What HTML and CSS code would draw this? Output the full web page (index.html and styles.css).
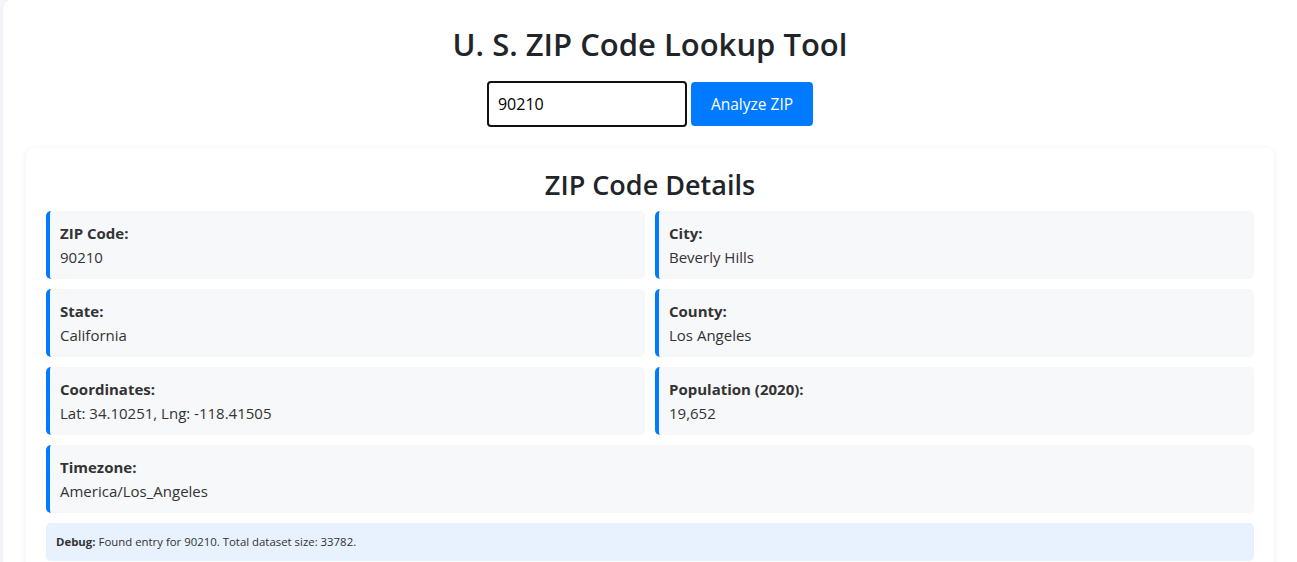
FILE: index.html
```html
<!DOCTYPE html>
<html lang="en">

  <head>
    <meta charset="UTF-8">
    <meta name="viewport" content="width=device-width, initial-scale=1.0">
    <title>U. S. ZIP Code Lookup Tool</title>
    <link rel="stylesheet" href="styles.css">
  </head>

  <body>
    <div class="page">
      <h1 class="title">U. S. ZIP Code Lookup Tool</h1>
      <div class="search">
        <input class="zip-input" type="text" value="90210">
        <button class="btn-analyze">Analyze ZIP</button>
      </div>

      <div class="card">
        <h2 class="card-title">ZIP Code Details</h2>
        <div class="details">
          <div class="item">
            <div class="label">ZIP Code:</div>
            <div class="value">90210</div>
          </div>
          <div class="item">
            <div class="label">City:</div>
            <div class="value">Beverly Hills</div>
          </div>
          <div class="item">
            <div class="label">State:</div>
            <div class="value">California</div>
          </div>
          <div class="item">
            <div class="label">County:</div>
            <div class="value">Los Angeles</div>
          </div>
          <div class="item">
            <div class="label">Coordinates:</div>
            <div class="value">Lat: 34.10251, Lng: -118.41505</div>
          </div>
          <div class="item">
            <div class="label">Population (2020):</div>
            <div class="value">19,652</div>
          </div>
          <div class="item item-wide">
            <div class="label">Timezone:</div>
            <div class="value">America/Los_Angeles</div>
          </div>
        </div>
        <div class="debug"><b>Debug:</b> Found entry for 90210. Total dataset size: 33782.</div>
      </div>
    </div>
  </body>

</html>
```

FILE: styles.css
```css
* {
  box-sizing: border-box;
}

body {
  margin: 0;
  background-color: #f5f6fa;
  font-family: "Open Sans", "Noto Sans", sans-serif;
  color: #333;
}

.page {
  margin-left: 3px;
  padding: 25px 23px 40px;
  background-color: #fff;
  border-radius: 8px 0 0 0;
  box-shadow: 0 0 4px rgba(0, 0, 0, .05);
}

.title {
  margin: 0;
  text-align: center;
  font-size: 31px;
  line-height: 38px;
  font-weight: 600;
  color: #212529;
}

.search {
  display: flex;
  justify-content: center;
  align-items: center;
  gap: 4px;
  margin-top: 18px;
}

.zip-input {
  width: 200px;
  height: 46px;
  padding: 0 9px;
  border: 2px solid #111;
  border-radius: 4px;
  font-family: inherit;
  font-size: 16px;
  color: #000;
  outline: none;
}

.btn-analyze {
  height: 44px;
  padding: 0 20px;
  border: none;
  border-radius: 4px;
  background-color: #007bff;
  color: #fff;
  font-family: inherit;
  font-size: 15.5px;
  cursor: pointer;
}

.card {
  margin-top: 21px;
  padding: 20px;
  background-color: #fff;
  border-radius: 8px;
  box-shadow: 0 1px 6px rgba(0, 0, 0, .07);
}

.card-title {
  margin: 0 0 9px;
  text-align: center;
  font-size: 27px;
  line-height: 34px;
  font-weight: 600;
  color: #212529;
}

.details {
  display: grid;
  grid-template-columns: 1fr 1fr;
  gap: 10px;
}

.item {
  padding: 10px;
  background-color: #f7f8fa;
  border-left: 4px solid #007bff;
  border-radius: 5px;
  font-size: 15px;
  line-height: 24px;
}

.item-wide {
  grid-column: 1 / 3;
}

.label {
  font-weight: 700;
}

.debug {
  margin-top: 10px;
  padding: 9px 10px;
  background-color: #e7f2fe;
  border-radius: 5px;
  font-size: 11.4px;
  line-height: 20px;
}
```
